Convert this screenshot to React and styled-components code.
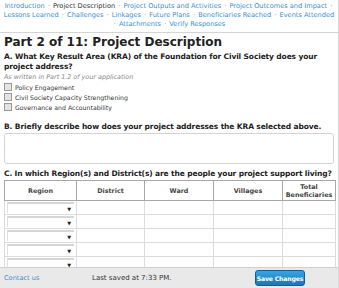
import React from "react";
import styled, {createGlobalStyle} from "styled-components";

const linkBlue = '#3a8fd0';

const GlobalStyle = createGlobalStyle`
  html, body {
    margin: 0;
    padding: 0;
    background: #ffffff;
    font-family: "DejaVu Sans", Verdana, sans-serif;
    overflow: hidden;
  }
`;

const Page = styled.div`
  width: 339px;
  height: 288px;
  display: flex;
  flex-direction: column;
  overflow: hidden;
  border-right: 1px solid #d8d8d8;
  box-sizing: border-box;
`;

const Content = styled.div`
  flex: 1;
  overflow: hidden;
`;

const Nav = styled.div`
  text-align: center;
  font-size: 6.6px;
  line-height: 9px;
  padding: 2px 1px 3px;
  color: #444;
  border-bottom: 1px solid #d4d4d4;
`;

const NavLink = styled.span`
  color: ${p => p.$active ? '#333' : linkBlue};
`;

const Dot = styled.span`
  color: #777;
  margin: 0 1px;
`;

const Body = styled.div`
  padding: 0 4px;
`;

const Title = styled.h1`
  font-size: 12px;
  font-weight: bold;
  margin: 2px 0 3px;
  color: #222;
  line-height: 14px;
`;

const Question = styled.h2`
  font-size: 7.5px;
  line-height: 10px;
  letter-spacing: -0.12px;
  font-weight: bold;
  margin: 0;
  color: #222;
`;

const Hint = styled.div`
  font-size: 6.4px;
  font-style: italic;
  color: #888;
  line-height: 10px;
`;

const CheckRow = styled.label`
  display: flex;
  align-items: center;
  gap: 3px;
  font-size: 6.2px;
  height: 10px;
  color: #333;
`;

const Box = styled.span`
  width: 6px;
  height: 6px;
  border: 1px solid #999;
  background: #e4e4e4;
`;

const Section = styled.div`
  margin-top: ${p => p.$top || 0}px;
`;

const TextArea = styled.div`
  margin-top: 1px;
  height: 29px;
  border: 1px solid #d4d4d4;
  border-radius: 3px;
`;

const Table = styled.table`
  border-collapse: collapse;
  width: 331px;
  margin-top: 1px;
  table-layout: fixed;
`;

const Th = styled.th`
  border: 1px solid #a8a8a8;
  font-size: 6.4px;
  font-weight: bold;
  color: #444;
  height: 19px;
  padding: 0;
  line-height: 8px;
`;

const Td = styled.td`
  border: 1px solid #dcdcdc;
  height: 13px;
  padding: 0;
`;

const Select = styled.div`
  margin: 0 2px;
  height: 9px;
  border-top: 2px solid #d6d6d6;
  border-left: 1px solid #e0e0e0;
  background: #fff;
  display: flex;
  justify-content: flex-end;
  align-items: center;
  font-size: 5px;
  padding-right: 3px;
  color: #222;
`;

const Footer = styled.div`
  height: 20px;
  flex-shrink: 0;
  background: #e9e9e9;
  border-top: 1px solid #d0d0d0;
  display: flex;
  align-items: center;
  padding: 0 4px;
  font-size: 6.6px;
  white-space: nowrap;
`;

const Contact = styled.span`
  color: ${linkBlue};
  width: 88px;
`;

const Saved = styled.span`
  color: #333;
  flex: 1;
  font-size: 7px;
`;

const SaveButton = styled.button`
  font-family: "DejaVu Sans", sans-serif;
  font-size: 6.2px;
  letter-spacing: -0.2px;
  font-weight: bold;
  color: #fff;
  white-space: nowrap;
  background: linear-gradient(#3aa3e0, #1479bd);
  border: 1px solid #0d5f96;
  border-radius: 3px;
  width: 50px;
  height: 16px;
  padding: 0;
  margin-right: 29px;
`;

const navItems = [
    'Introduction', 'Project Description', 'Project Outputs and Activities', 'Project Outcomes and Impact',
    'Lessons Learned', 'Challenges', 'Linkages', 'Future Plans', 'Beneficiaries Reached', 'Events Attended',
    'Attachments', 'Verify Responses',
];

const kras = ['Policy Engagement', 'Civil Society Capacity Strengthening', 'Governance and Accountability'];

export default function App() {
    return <>
        <GlobalStyle/>
        <Page>
            <Content>
                <Nav>
                    {navItems.map((item, i) => <React.Fragment key={item}>
                        <NavLink $active={item === 'Project Description'}>{item}</NavLink>
                        {i < navItems.length - 1 && <> <Dot>·</Dot> </>}
                    </React.Fragment>)}
                </Nav>
                <Body>
                    <Title>Part 2 of 11: Project Description</Title>
                    <Question>A. What Key Result Area (KRA) of the Foundation for Civil Society does your project address?</Question>
                    <Hint>As written in Part 1.2 of your application</Hint>
                    {kras.map(k => <CheckRow key={k}><Box/>{k}</CheckRow>)}
                    <Section $top={10}>
                        <Question>B. Briefly describe how does your project addresses the KRA selected above.</Question>
                        <TextArea/>
                    </Section>
                    <Section $top={5}>
                        <Question>C. In which Region(s) and District(s) are the people your project support living?</Question>
                        <Table>
                            <colgroup>
                                <col style={{width: 72}}/>
                                <col style={{width: 68}}/>
                                <col style={{width: 69}}/>
                                <col style={{width: 69}}/>
                                <col style={{width: 53}}/>
                            </colgroup>
                            <thead>
                            <tr>
                                <Th>Region</Th>
                                <Th>District</Th>
                                <Th>Ward</Th>
                                <Th>Villages</Th>
                                <Th>Total<br/>Beneficiaries</Th>
                            </tr>
                            </thead>
                            <tbody>
                            {[0, 1, 2, 3, 4].map(r => <tr key={r}>
                                <Td><Select>▼</Select></Td>
                                <Td/><Td/><Td/><Td/>
                            </tr>)}
                            </tbody>
                        </Table>
                    </Section>
                </Body>
            </Content>
            <Footer>
                <Contact>Contact us</Contact>
                <Saved>Last saved at 7:33 PM.</Saved>
                <SaveButton>Save Changes</SaveButton>
            </Footer>
        </Page>
    </>;
}
